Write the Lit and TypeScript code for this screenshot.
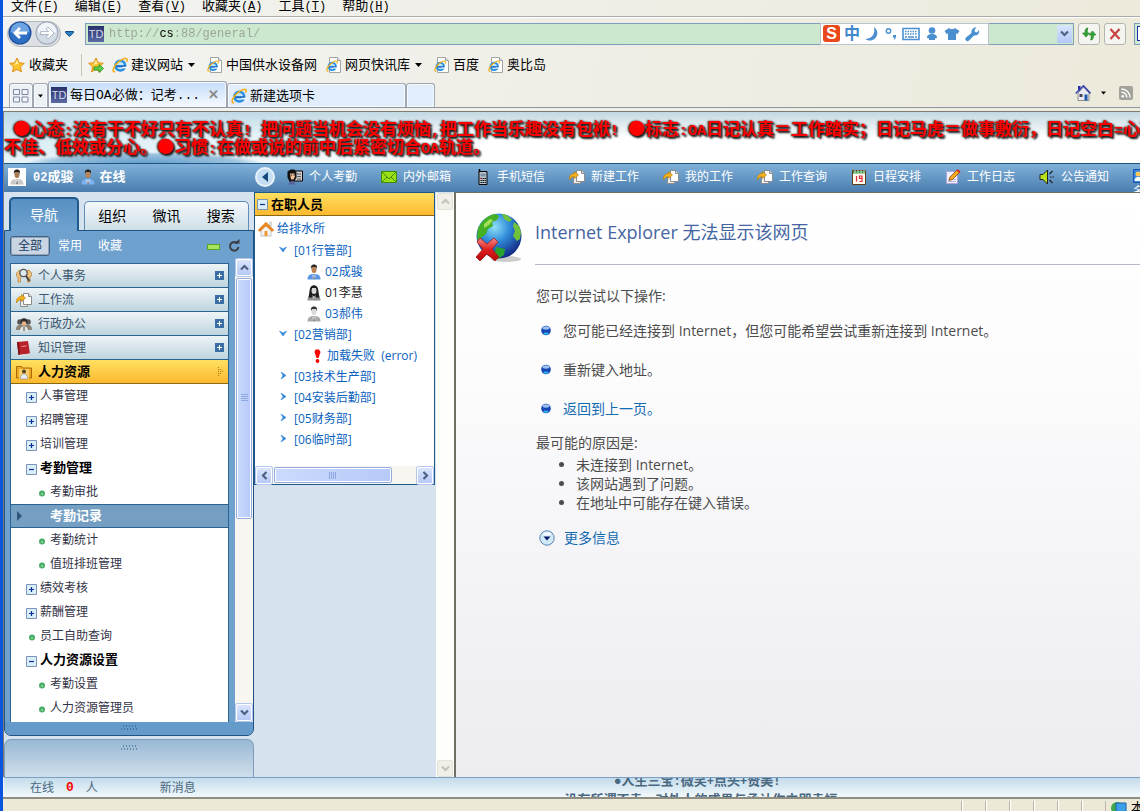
import { LitElement, html, css, svg, nothing, TemplateResult } from "lit";
import { customElement, state } from "lit/decorators.js";

/* ---------- small drawing library ---------- */

const ieMark = svg`
  <circle cx="8.3" cy="8.6" r="4.9" fill="#bfe6fb" stroke="#2a8fe0" stroke-width="2.6"/>
  <path d="M4 9.2h9.6" stroke="#1668c4" stroke-width="2"/>
  <path d="M10.5 10.6h5" stroke="#fff" stroke-width="1.6"/>
  <path d="M3.2 14.6C.2 15.6.6 12 3.4 8.2 6.6 4 12.4.4 14.6 1.6c1 .6.6 2-.2 3.2" fill="none" stroke="#f2b01e" stroke-width="1.6"/>`;

const ie = () => html`<svg class="i16" viewBox="0 0 16 16">${ieMark}</svg>`;

const iePage = () => html`<svg class="i16" viewBox="0 0 16 16">
  <path d="M3.5.5h8l3 3v12h-11z" fill="#fff" stroke="#a4a4a4"/>
  <path d="M11.5.5v3h3" fill="#ddd" stroke="#a4a4a4"/>
  <g transform="translate(0 3) scale(.75)">${ieMark}</g></svg>`;

const starPath = "M8 1l2.2 4.7 5.1.6-3.8 3.5 1 5.1L8 12.4 3.5 14.9l1-5.1L.7 6.3l5.1-.6z";
const star = (plus = false) => html`<svg class="i16" viewBox="0 0 16 16">
  <path d=${starPath} fill="#fdc32d" stroke="#d98a12" stroke-width=".9"/>
  <path d="M8 3l1.5 3.5L5.5 8z" fill="#fff0a8"/>
  ${plus ? svg`<path d="M6 10h5V7.5l4.5 4-4.5 4V13H6z" fill="#5fd04a" stroke="#1f8a1c" stroke-width=".8"/>` : nothing}</svg>`;

const person = (shirt: string, skin: string, hair: string, longHair = false) => html`<svg class="i16" viewBox="0 0 16 16">
  <path d="M1.5 15.5c0-4 2-5.500 6.500-5.500s6.500 1.500 6.500 5.500z" fill=${shirt}/>
  ${longHair ? svg`<path d="M2.500 12.500C4 6 3 .5 8 .5S12 6 13.500 12.500z" fill=${hair}/>` : nothing}
  <ellipse cx="8" cy="5.500" rx="2.500" ry="3.600" fill=${skin}/>
  <path d="M5 5C4.500 1.500 6 .4 8 .4S11.500 1.500 11 5L10 3H6z" fill=${hair}/>
  <path d="M6.500 10L8 12l1.500-2L9 15H7z" fill="#fff"/>
  <path d="M7.700 11.500h.7l.4 3-.8 1-.7-1z" fill="#666"/></svg>`;

const docs = () => html`<svg class="i16" viewBox="0 0 16 16">
  <path d="M4.500 6.500h7v8h-7z" fill="#eee" stroke="#8d8d8d"/>
  <path d="M7.500 1.500h5l3 3v8h-8z" fill="#fff" stroke="#8d8d8d"/>
  <path d="M12.500 1.500v3h3" fill="#ddd" stroke="#8d8d8d"/>
  <path d="M.5 11C0 7 2 4.500 5.500 4.500V2.500l4 3.500-4 3.500v-2C3.500 7.500 2 8.500.5 11z" fill="#f5b21d" stroke="#b97c0d" stroke-width=".7"/></svg>`;

const glyphs: Record<string, () => TemplateResult> = {
  attend: () => html`<svg class="i16" viewBox="0 0 16 16">
    <path d="M7 2h8.500v10H7z" fill="#cfcfcf" stroke="#000"/><path d="M10 5h4M10 7.500h4M10 10h4" stroke="#555"/>
    <path d="M.5 2.500l3-2h4l2 3v5l-3 5H3l-2.500-5z" fill="#111"/>
    <path d="M3 4.500h4.500l.5 3-1.500 3H4z" fill="#f2c09a"/><path d="M4 6h1M6.500 6h1" stroke="#000"/>
    <path d="M1 15.500l3-3.500h3l1 3.500z" fill="#5a5f9a"/></svg>`,
  mail: () => html`<svg class="i16" viewBox="0 0 16 16">
    <path d="M.5 2.500h15v11H.5z" fill="#9be015" stroke="#3f8a0a"/>
    <path d="M1 3l7 7 7-7M1 13l5-5M15 13l-5-5" fill="none" stroke="#3f8a0a"/></svg>`,
  phone: () => html`<svg class="i16" viewBox="0 0 16 16">
    <path d="M4.500 0v4" stroke="#000" stroke-width="1.500"/><path d="M4 2.500h8v13H4z" fill="#b9c3cc" stroke="#000"/>
    <path d="M5.500 4.500h5v3h-5z" fill="#7c92a6"/>
    <path d="M5.500 9.500h1.500m.5 0H9m.5 0H11M5.500 11.500h1.500m.5 0H9m.5 0H11M5.500 13.500h1.500m.5 0H9m.5 0H11" stroke="#111"/>
    <path d="M5.500 9.500h1.300" stroke="#d11"/></svg>`,
  docs,
  calendar: () => html`<svg class="i16" viewBox="0 0 16 16">
    <path d="M1.500 1.500h13v14h-13z" fill="#fffdf0" stroke="#5b3d1b"/>
    <path d="M2 2h12v2.500H2z" fill="#3e9a4c"/><path d="M4 1v3M7 1v3M10 1v3M13 1v3" stroke="#fff" stroke-width=".8"/>
    <path d="M5.500 7v5.500M8.500 9.500h2.500V7H8.500zm2.500 0v3H8.500" fill="none" stroke="#d23" stroke-width="1.200"/></svg>`,
  diary: () => html`<svg class="i16" viewBox="0 0 16 16">
    <path d="M1.500 2.500h11v12h-11z" fill="#f1efff" stroke="#a9a4dd"/><path d="M3 12.500h8M3 10.500h8" stroke="#b9b5e5"/>
    <path d="M4 11.500l1-3.500 7-7 2.500 2.500-7 7z" fill="#f7a823" stroke="#8b4a10" stroke-width=".8"/>
    <path d="M11.500 1.500L13 .3l2.600 2.500L14.300 4z" fill="#d8261c"/></svg>`,
  speaker: () => html`<svg class="i16" viewBox="0 0 16 16">
    <path d="M1 5.500h3L8.500 1v14L4 10.500H1z" fill="#b6e21a" stroke="#222"/>
    <path d="M10.500 5l3-3M11 8h1.500m1 0H15M10.500 11l3 3" stroke="#222" stroke-width="1.200"/></svg>`,
  card: () => html`<svg class="i16" viewBox="0 0 16 16">
    <path d="M.5 1.500h15v13H.5z" fill="#2b86e8" stroke="#1a56a8"/><circle cx="5" cy="6" r="2.500" fill="#ffc95a"/>
    <path d="M1.500 13c0-3 1.500-4 3.500-4s3.500 1 3.500 4z" fill="#fff"/></svg>`,
  affairs: () => html`<svg class="i16" viewBox="0 0 16 16">
    <path d="M.5 5l3-3 3 1v5l-2 1v5H2V9L.5 8zM10 3l3-1 2.500 3v3L14 9v5h-2.500V9L10 8z" fill="#f1c27a" stroke="#b3803a" stroke-width=".7"/>
    <circle cx="7.500" cy="5" r="3.700" fill="#dfe9f0" stroke="#555" stroke-width="1.300"/>
    <path d="M10 8l3.500 5" stroke="#444" stroke-width="2"/></svg>`,
  office: () => html`<svg class="i16" viewBox="0 0 16 16">
    <circle cx="4" cy="6" r="2.800" fill="#555"/><circle cx="12" cy="6" r="2.800" fill="#555"/>
    <path d="M0 14c0-4 1.500-5 4-5h8c2.500 0 4 1 4 5z" fill="#8d8478"/>
    <circle cx="8" cy="5.500" r="3.300" fill="#332b25"/><ellipse cx="8" cy="7.500" rx="2.300" ry="2.300" fill="#e5b48a"/>
    <path d="M4 15.500c0-4 1.500-5 4-5s4 1 4 5z" fill="#e6e6e6"/><path d="M7.500 11h1v4h-1z" fill="#444"/></svg>`,
  book: () => html`<svg class="i16" viewBox="0 0 16 16">
    <path d="M1 2l11-1 2 12.500L2.500 15z" fill="#b8222a"/><path d="M1 2l1.500 13 1.500-.3L2.700 1.900z" fill="#7b1016"/>
    <path d="M3 15l11-1.500v1.300L4 16z" fill="#ddd"/><path d="M5.500 6.500l5-.6" stroke="#ef9a9a"/></svg>`,
  hr: () => html`<svg class="i16" viewBox="0 0 16 16">
    <path d="M.5 2.500h5l1 1.500h9v10H.5z" fill="#f1a820" stroke="#a86a0b"/><path d="M3 5h10v10H3z" fill="#f7cf6b"/>
    <circle cx="8" cy="7.500" r="2" fill="#5c4020"/><path d="M4.500 15c0-4 1.500-5 3.500-5s3.500 1 3.500 5z" fill="#e9eef5" stroke="#777" stroke-width=".5"/></svg>`,
};

const homeOrange = () => html`<svg class="i16" viewBox="0 0 16 16">
  <path d="M3 8v7h10V8L8 3z" fill="#f4f4f4" stroke="#aaa" stroke-width=".7"/>
  <path d="M11.500 1h2v4h-2z" fill="#eee" stroke="#aaa" stroke-width=".5"/>
  <path d="M.3 9L8 1.300 15.700 9l-1.500 1.500L8 4.800 1.800 10.500z" fill="#f08a1c" stroke="#c9630a" stroke-width=".6"/>
  <path d="M6.500 10h3v5h-3z" fill="#ee9a34"/></svg>`;

const homeBlue = () => html`<svg class="i16" viewBox="0 0 16 16">
  <path d="M3 1h2.500v5H3z" fill="#2a2aa8"/><path d="M3 8v7.500h11V8L8.500 2z" fill="#e9e9f2" stroke="#777" stroke-width=".8"/>
  <path d="M.7 8.500L8.500.8l7 7.700" fill="none" stroke="#3c46b0" stroke-width="1.600"/>
  <path d="M4.500 9h3v3h-3z" fill="#445"/><path d="M9.500 9.500h3v6h-3z" fill="#1c58a8"/></svg>`;

const caret = (color = "#000", size = 7) => html`<svg class="caret" width=${size} height="4" viewBox="0 0 7 4"><path d="M0 0h7L3.500 4z" fill=${color}/></svg>`;

const chevron = (dir: "up" | "down" | "left" | "right", color = "#4d6185") => {
  const turn = { up: 0, right: 90, down: 180, left: 270 }[dir];
  return html`<svg width="9" height="9" viewBox="0 0 9 9"><path d="M1 6.500L4.500 3 8 6.500" fill="none" stroke=${color} stroke-width="2.200" transform=${`rotate(${turn} 4.5 4.5)`}/></svg>`;
};

const plusBox = (open: boolean) => html`<svg class="box" width="11" height="11" viewBox="0 0 11 11">
  <path d="M.5.5h10v10H.5z" fill="#d9eefa" stroke="#7b93b5"/>
  <path d=${open ? "M3 5.500h5" : "M3 5.500h5M5.500 3v5"} stroke="#0b2f94" stroke-width="1.200"/></svg>`;

const grip = () => html`<svg class="grip" width="17" height="5" viewBox="0 0 17 5">
  <path d="M2 1h1m2 0h1m2 0h1m2 0h1m2 0h1M0 4h1m2 0h1m2 0h1m2 0h1m2 0h1m2 0h1" stroke="#1d4f80"/></svg>`;

/* Half-width characters are set in a smaller monospaced face beside the full-width ones. */
const mixed = (text: string) =>
  text.split(/([\x20-\x7e]+)/).map((part, i) => (i % 2 ? html`<span class="half">${part}</span>` : part));

/* ---------- data ---------- */

const MENUS = [["文件", "F"], ["编辑", "E"], ["查看", "V"], ["收藏夹", "A"], ["工具", "T"], ["帮助", "H"]];

const SHORTCUTS: [string, string][] = [
  ["attend", "个人考勤"], ["mail", "内外邮箱"], ["phone", "手机短信"], ["docs", "新建工作"], ["docs", "我的工作"],
  ["docs", "工作查询"], ["calendar", "日程安排"], ["diary", "工作日志"], ["speaker", "公告通知"],
];

const GROUPS: [string, string][] = [["affairs", "个人事务"], ["docs", "工作流"], ["office", "行政办公"], ["book", "知识管理"]];

type Item = { label: string; kind: "plus" | "minus" | "dot"; deep?: boolean };
const ITEMS: Item[] = [
  { label: "人事管理", kind: "plus" },
  { label: "招聘管理", kind: "plus" },
  { label: "培训管理", kind: "plus" },
  { label: "考勤管理", kind: "minus" },
  { label: "考勤审批", kind: "dot", deep: true },
  { label: "考勤记录", kind: "dot", deep: true },
  { label: "考勤统计", kind: "dot", deep: true },
  { label: "值班排班管理", kind: "dot", deep: true },
  { label: "绩效考核", kind: "plus" },
  { label: "薪酬管理", kind: "plus" },
  { label: "员工自助查询", kind: "dot" },
  { label: "人力资源设置", kind: "minus" },
  { label: "考勤设置", kind: "dot", deep: true },
  { label: "人力资源管理员", kind: "dot", deep: true },
];

@customElement("app-root")
export class AppRoot extends LitElement {
  @state() private selected = "考勤记录";

  static styles = css`
    :host {
      display: flex; flex-direction: column; height: 100vh; overflow: hidden; box-sizing: border-box;
      border-left: 3px solid #0a55e0;
      font: 12px/16px "Liberation Sans", "Noto Sans CJK SC", sans-serif; color: #000;
      background: linear-gradient(100deg, #f3f3f1 0, #eeede3 60%, #ece9d8 100%);
    }
    * { box-sizing: border-box; }
    button, input { font: inherit; color: inherit; border: 0; background: none; padding: 0; margin: 0; }
    button { white-space: nowrap; }
    a { text-decoration: none; color: inherit; }
    ul { list-style: none; margin: 0; padding: 0; }
    svg { display: block; flex: none; }
    .i16 { width: 16px; height: 16px; }
    .half { font-family: "Liberation Mono", monospace; line-height: 0; }

    /* browser chrome */
    .menus { display: flex; align-items: flex-start; gap: 16px; height: 18px; padding-left: 8px; border-bottom: 2px groove #fff; font-size: 13px; line-height: 12px; flex: none; }
    .menus .half { font-size: 12px; }
    .nav { display: flex; align-items: center; height: 31px; padding-left: 4px; flex: none; }
    .travel { display: flex; align-items: center; width: 54px; height: 26px; border-radius: 13px; border: 1px solid #b3b6bb; background: #dcdfe3; }
    .travel button { width: 26px; height: 26px; }
    .history { width: 24px; padding-left: 4px; }
    .address { position: relative; flex: 1; display: flex; align-items: center; height: 22px; border: 1px solid #7f9db9; background: #cce8cf; padding-left: 2px; }
    .td { display: grid; place-items: center; width: 16px; height: 16px; background: linear-gradient(#27306a, #5b6aa6); color: #d5dbea; font: 11px/16px "Liberation Sans", sans-serif; flex: none; }
    .url { flex: 1; min-width: 0; height: 20px; margin-left: 5px; font: 12px/20px "Liberation Mono", monospace; color: #8f9a8c; outline: none;
      background: linear-gradient(90deg, #9aa397 50px, #000 50px, #000 65px, #9aa397 65px); -webkit-background-clip: text; background-clip: text; -webkit-text-fill-color: transparent; }
    .drop { width: 15px; height: 18px; display: grid; place-items: center; margin-right: 1px; border-radius: 1px; background: linear-gradient(#dbe6fd, #b3c8f7); }
    .ime { position: absolute; right: 84px; top: -1px; width: 169px; height: 22px; display: flex; align-items: center; gap: 4px; padding-left: 2px; background: #fff; border: 1px solid #b9c4cf; color: #4488cc; font-size: 16px; line-height: 20px; font-weight: 700; }
    .ime .logo { width: 17px; height: 17px; border-radius: 3px; background: #e8481a; color: #fff; text-align: center; font: 700 16px/17px "Liberation Sans", sans-serif; }
    .sq { width: 22px; height: 22px; border: 1px solid #b4b6b2; border-radius: 3px; background: #f4f4f0; display: grid; place-items: center; margin-left: 4px; }
    .search { width: 6px; height: 22px; margin-left: 8px; border: 1px solid #7f9db9; border-right: 0; background: #cce8cf; display: flex; align-items: center; justify-content: flex-end; }
    .search span { width: 3px; height: 15px; border: 1px solid #1c2fa8; border-right: 0; background: #fff; }
    .favs { display: flex; align-items: center; height: 32px; padding-left: 6px; font-size: 13px; flex: none; }
    .favs button { display: flex; align-items: center; gap: 3px; margin-right: 9px; }
    .favs .first { gap: 4px; margin-right: 20px; }
    .favs .add { margin-right: 8px; padding-left: 6px; border-left: 1px solid #c5c2b4; height: 22px; margin-left: -7px; }
    .favs .caret { margin: 0 3px 0 2px; }
    .tabs { display: flex; align-items: flex-end; height: 27px; padding-left: 6px; border-bottom: 1px solid #8c95a4; flex: none; font-size: 13px; }
    .tab { display: flex; align-items: center; gap: 3px; height: 24px; padding-left: 3px; border: 1px solid #a0a7b0; border-bottom: 0; border-radius: 3px 3px 0 0; background: #e1edfa; box-shadow: inset 0 0 0 1px #f6faff; }
    .quick { width: 24px; padding-left: 3px; background: #eef1f4; }
    .quick2 { width: 15px; padding-left: 4px; background: #eef1f4; }
    .tab.on { width: 179px; height: 26px; padding-left: 2px; padding-right: 7px; background: linear-gradient(#c5dcf9, #f6faff); }
    .tab.on .x { margin-left: auto; color: #8a8a8a; font-weight: 700; }
    .tab.two { width: 179px; }
    .tab.new { width: 29px; }
    .tools { margin-left: auto; display: flex; align-items: center; gap: 10px; padding: 0 7px 6px 0; }
    .rss { margin-left: 3px; width: 14px; height: 14px; }

    /* framed page */
    .page { flex: 1; min-height: 0; margin-top: 3px; display: flex; flex-direction: column; border-left: 1px solid #7c7c74; border-top: 1px solid #7c7c74; background: #d6e3ee; }
    .banner { height: 51px; flex: none; padding-top: 7px; overflow: hidden; font: 700 17px/18px "Noto Sans CJK SC", sans-serif; color: #f00; white-space: nowrap;
      text-shadow: 1px 1px 2px #111, 2px 2px 2px #333, -1px 0 2px #444;
      background: radial-gradient(ellipse 120px 12px at 140px 52px, #5f9acb 0, #9cc3dd 80%, transparent 100%), radial-gradient(ellipse 500px 60px at 0 20px, #b6dcec99, transparent), linear-gradient(#c3d8e2, #fff 50%); }
    .banner .half { font-size: 15px; white-space: pre; }
    .bar { height: 29px; flex: none; display: flex; align-items: center; padding: 0 0 3px 4px; border-top: 1px solid #1d5480; background: linear-gradient(#80b1da, #4a7dae); color: #fff; overflow: hidden; }
    .me { display: flex; align-items: center; width: 247px; flex: none; font-weight: 700; font-size: 13px; }
    .me .half { font-size: 12px; }
    .me .face { width: 18px; height: 18px; background: #fff; margin-right: 7px; padding: 1px; }
    .me .name { margin-right: 7px; }
    .me .i16 { margin-right: 3px; }
    .me .face .i16 { margin: 0; }
    .round { width: 20px; height: 20px; border-radius: 50%; border: 2px solid #e6f1fa; background: #c3def3; display: grid; place-items: center; margin-right: 12px; flex: none; }
    .short { display: flex; align-items: center; gap: 6px; width: 94px; flex: none; }
    .short.cut { align-self: flex-start; flex-direction: column; align-items: flex-start; gap: 0; padding-top: 4px; }
    .main { flex: 1; min-height: 0; display: flex; }

    /* navigation column */
    .side { width: 250px; flex: none; display: flex; flex-direction: column; }
    .navtabs { display: flex; align-items: flex-end; gap: 5px; height: 38px; padding: 0 5px; flex: none; font-size: 14px; line-height: 18px; }
    .navtabs .cur { width: 70px; height: 34px; color: #fff; border: 2px solid #1f5a8e; border-bottom: 0; border-radius: 5px 5px 0 0; background: linear-gradient(#5790c3, #6fa2cf); position: relative; top: 1px; }
    .rest { flex: 1; display: flex; justify-content: space-around; height: 29px; border: 1px solid #5d8db6; border-bottom: 0; border-radius: 5px 5px 0 0; background: linear-gradient(#f4f8fa, #cfdfe8); }
    .panel { flex: 1; min-height: 0; display: flex; flex-direction: column; background: #6fa1ce; border: 1px solid #1f5282; border-radius: 0 0 7px 7px; overflow: hidden; }
    .filters { display: flex; align-items: center; height: 28px; padding: 2px 13px 0 5px; gap: 8px; color: #fff; flex: none; }
    .filters .all { width: 40px; height: 20px; border: 1px solid #44607f; border-radius: 3px; background: #c9d5e2; color: #16395f; box-shadow: inset 0 0 0 1px #8ea6bf; }
    .filters .minus { width: 13px; height: 6px; border: 1px solid #53a62a; background: #a9e25c; margin: 2px 0 0 auto; }
    .filters .save { margin-left: 8px; }
    .body { flex: 1; min-height: 0; display: flex; justify-content: space-between; padding-left: 5px; }
    .acc { width: 219px; margin-top: 4px; border: 1px solid #2a6392; border-bottom: 0; background: #fff; overflow: hidden; }
    .group { display: flex; align-items: center; gap: 6px; width: 100%; height: 24px; padding: 0 4px 0 5px; border-bottom: 1px solid #2a6392; background: linear-gradient(#eef4f7, #bfd5de); color: #3c566e; }
    .group .p { margin-left: auto; width: 9px; height: 9px; background: #3c6ea6; }
    .group.open { font-weight: 700; font-size: 13px; color: #000; border-bottom-color: #8a6a10; background: linear-gradient(#ffe060, #fcb92f); }
    .group.open svg:last-child { margin-left: auto; }
    .item { display: flex; align-items: center; gap: 3px; width: 100%; height: 24px; padding-left: 15px; color: #333347; }
    .item .box, .item .dot { margin-top: 2px; }
    .item .dot { width: 11px; }
    .item.deep { padding-left: 25px; }
    .item.bold { font-weight: 700; font-size: 13px; color: #000; }
    .item.sel { background: #749fc2; border: 1px solid #2a6392; border-width: 1px 0; color: #fff; font-weight: 700; font-size: 13px; padding-left: 6px; gap: 28px; }
    .vs { width: 18px; display: flex; flex-direction: column; background: #f7f6f1; padding: 0 1px; }
    .sb { display: grid; place-items: center; width: 16px; height: 17px; border: 1px solid #fff; border-radius: 2px; background: linear-gradient(#dae4fd, #b7caf5); box-shadow: 0 0 0 1px #b4c6f0; flex: none; }
    .thumb { display: grid; place-items: center; background: linear-gradient(90deg, #cbdafd, #b6c9f8); border: 1px solid #93abe0; border-radius: 2px; outline: 1px solid #fff; outline-offset: -2px; }
    .vs .thumb { flex: 0 0 52%; margin-top: 2px; }
    .vs .sb:last-child { margin-top: auto; margin-bottom: 1px; }
    .foot { display: grid; place-items: center; height: 13px; background: #659bcb; flex: none; padding-bottom: 3px; }
    .panel2 { height: 38px; margin-top: 3px; border: 1px solid #7d9dba; border-bottom: 0; border-radius: 7px 7px 0 0; background: linear-gradient(#98b9d5, #d0deea); display: grid; justify-content: center; padding-top: 5px; flex: none; }

    /* staff tree */
    .staff { width: 181px; flex: none; align-self: flex-start; border: 1px solid #1f5a8e; border-top: 0; background: #fff; color: #0a62c0; font-family: "Open Sans", "Noto Sans CJK SC", sans-serif; }
    .head { display: flex; align-items: center; gap: 3px; width: 100%; height: 24px; padding-left: 2px; border-top: 1px solid #1f5a8e; border-bottom: 1px solid #8a6a10; background: linear-gradient(#ffe060, #fcb92f); color: #000; font-weight: 700; font-size: 13px; margin-bottom: 2px; }
    .row { display: flex; align-items: center; height: 21px; white-space: nowrap; }
    .row.root { gap: 3px; padding-left: 3px; height: 22px; }
    .row.dept { gap: 6px; padding-left: 23px; }
    .row.user { gap: 3px; padding-left: 51px; }
    .row.user.woman { color: #222; }
    .row.err { gap: 6px; padding-left: 58px; }
    .hs { display: flex; align-items: center; height: 18px; margin-top: 16px; padding: 0 1px; background: #f7f6f1; }
    .hs .thumb { width: 118px; height: 16px; margin-left: 2px; }
    .hs .sb:last-child { margin-left: auto; }
    .off { width: 18px; margin: 1px 0 0 1px; background: #fefefb; display: flex; flex-direction: column; justify-content: space-between; padding: 0 1px; flex: none; }
    .off button { width: 16px; height: 17px; display: grid; place-items: center; border: 1px solid #e3e2d8; border-radius: 2px; background: #f1f0e8; }

    /* error page */
    .error { flex: 1; min-width: 0; border: 2px solid #716f64; border-right: 0; border-bottom: 0; border-top-width: 1px; padding: 19px 0 0 20px; background: linear-gradient(#fff 0, #fcfcfd 30%, #ececf1 100%); font: 14px/20px "Open Sans", "Noto Sans CJK SC", sans-serif; color: #4c4c4c; }
    .top { display: flex; gap: 11px; }
    .globe { width: 48px; height: 50px; margin-top: 1px; }
    h1 { flex: 1; height: 53px; margin: 0; padding-top: 7px; border-bottom: 1px solid #b4b8c8; font-weight: 400; font-size: 18px; line-height: 26px; color: #4465a2; }
    .txt { padding-left: 60px; }
    p { margin: 0; }
    p.try { margin-top: 21px; }
    .todo { margin: 15px 0 14px; }
    .todo li { display: flex; align-items: center; gap: 11px; padding-left: 4px; height: 20px; margin-top: 19px; }
    .todo li:first-child { margin-top: 0; }
    .txt a { color: #136bb0; }
    .why { list-style: disc; padding-left: 40px; line-height: 19px; margin-top: 2px; }
    .more { display: flex; align-items: center; gap: 9px; margin-top: 16px; padding-left: 3px; color: #136bb0; }

    /* bottom strips */
    .online { height: 20px; flex: none; display: flex; border-top: 1px solid #7ba0c4; background: linear-gradient(#c3dceb, #f2f8fb); color: #4a6880; overflow: hidden; margin-left: 1px; }
    .online .l { width: 250px; display: flex; align-items: center; padding-left: 26px; flex: none; }
    .online b { color: #f00; margin: 0 12px; font-size: 13px; font-family: "Liberation Mono", monospace; }
    .online .msg { margin-left: 62px; }
    .ticker { flex: 1; margin-top: -7px; text-align: center; font-weight: 700; font-size: 13px; line-height: 19px; white-space: nowrap; }
    .ticker .half { font-size: 12px; }
    .status { height: 14px; flex: none; display: flex; justify-content: flex-end; border-top: 2px solid #8f8d80; background: #ece9d8; overflow: hidden; padding-top: 2px; }
    .status i { width: 24px; border-left: 1px solid #bab7a6; box-shadow: inset 1px 0 #fff; }
    .status .zone { display: flex; gap: 4px; width: 35px; padding-left: 5px; border-left: 1px solid #bab7a6; font-size: 13px; line-height: 14px; overflow: hidden; flex: none; }
  `;

  private chrome() {
    return html`
      <nav class="menus">${MENUS.map(([n, k]) => html`<button>${n}<span class="half">(<u>${k}</u>)</span></button>`)}</nav>
      <div class="nav">
        <div class="travel">
          <button aria-label="后退"><svg width="26" height="26" viewBox="0 0 26 26"><circle cx="12" cy="12" r="11.500" fill="#1d4f9e"/><circle cx="12" cy="12" r="10.300" fill="#2e6fc4"/><path d="M2.500 11a9.500 9.500 0 0 1 19 0c-5 2-14 2-19 0z" fill="#6fa4e2"/><path d="M5 12l6-6 2 2-2.600 2.600h8.600v3h-8.600L13 16l-2 2z" fill="#fff"/></svg></button>
          <button aria-label="前进"><svg width="26" height="26" viewBox="0 0 26 26"><circle cx="13" cy="12" r="11.500" fill="#9aa6b6"/><circle cx="13" cy="12" r="10.500" fill="#d3dbe5"/><path d="M3.500 11a9.500 9.500 0 0 1 19 0c-5 2-14 2-19 0z" fill="#f0f4f8"/><path d="M20 12l-6-6-2 2 2.600 2.600h-8v3h8L12 16l2 2z" fill="#fff" stroke="#9aa6b6" stroke-width=".8"/></svg></button>
        </div>
        <button class="history" aria-label="历史记录"><svg width="9" height="6" viewBox="0 0 9 6"><path d="M.5.5h8v1.200L4.500 5.500.5 1.700z" fill="#2a7fc0" stroke="#124c86"/></svg></button>
        <div class="address">
          <span class="td">TD</span>
          <input class="url" aria-label="地址" .value=${"http://cs:88/general/"} />
          <button class="drop" aria-label="展开">${chevron("down")}</button>
          <div class="ime">
            <span class="logo">S</span><span>中</span>
            <svg width="16" height="16" viewBox="0 0 16 16"><path d="M10 1c4 3 4.500 8 1 11.500-3 2.700-7.500 2.500-9.500.5C9 12.500 11.500 7 10 1z" fill="#4a90d0"/></svg>
            <svg width="14" height="16" viewBox="0 0 14 16"><circle cx="4.500" cy="5" r="2.200" fill="none" stroke="#4a90d0" stroke-width="1.400"/><path d="M9 9h3c.5 2.500-.5 4-2.500 5 .8-1.200 1-2 .8-2.500H9z" fill="#4a90d0"/></svg>
            <svg width="18" height="14" viewBox="0 0 18 14"><path d="M1 1.500h16v11H1z" fill="#fff" stroke="#4a90d0" stroke-width="1.600"/><path d="M3 4.500h12M3 7h12" stroke="#4a90d0" stroke-width="1.600" stroke-dasharray="1.500 1"/><path d="M3 10h2m1 0h6m1 0h2" stroke="#4a90d0" stroke-width="1.500"/></svg>
            <svg width="16" height="16" viewBox="0 0 16 16"><circle cx="8" cy="4.500" r="3.300" fill="#4a90d0"/><path d="M3 12c0-3 2-4 5-4s5 1 5 4l-2 .5V14H5v-1.500z" fill="#4a90d0"/></svg>
            <svg width="16" height="16" viewBox="0 0 16 16"><path d="M5 2c1 1.500 5 1.500 6 0l4.500 3-2 3L12 7.500V14H4V7.500L2.500 8l-2-3z" fill="#4a90d0"/></svg>
            <svg width="16" height="16" viewBox="0 0 16 16"><path d="M2 14.500c-1-1-1-2 0-3L7.500 7C7 4 9 1 12.500 1.500L10.500 4l.5 2 2 .5 2-2.500c1 3.500-2 6-5 5.500L5 14.500c-1 1-2 1-3 0z" fill="#4a90d0"/></svg>
          </div>
        </div>
        <button class="sq" aria-label="刷新"><svg width="16" height="14" viewBox="0 0 16 14"><path d="M7 1C4.500 1 4 2.500 4 6H1.500L5 10l3.500-4H6.300C6.300 3.500 6.300 2 7 1zM9.500 13c2.500 0 3-1.500 3-5H15l-3.500-4L8 8h2.200c0 2.500 0 4-.7 5z" fill="#34a436" stroke="#177a1c" stroke-width=".6"/></svg></button>
        <button class="sq" aria-label="停止"><svg width="12" height="12" viewBox="0 0 12 12"><path d="M1.500 1l9 10M10.500 1l-9 10" stroke="#c8433f" stroke-width="2.200"/></svg></button>
        <div class="search"><span></span></div>
      </div>
      <div class="favs">
        <button class="first">${star()}收藏夹</button>
        <button class="add" aria-label="添加到收藏夹栏">${star(true)}</button>
        <button>${ie()}建议网站 ${caret()}</button>
        <button>${iePage()}中国供水设备网</button>
        <button>${iePage()}网页快讯库 ${caret()}</button>
        <button>${iePage()}百度</button>
        <button>${iePage()}奥比岛</button>
      </div>
      <div class="tabs">
        <button class="tab quick" aria-label="快速导航选项卡"><svg width="16" height="14" viewBox="0 0 16 14"><path d="M.5.5h6v5h-6zM9 .5h6v5H9zM.5 8h6v5h-6zM9 8h6v5H9z" fill="#f2f4fb" stroke="#7d86a4"/></svg></button>
        <button class="tab quick2" aria-label="选项卡列表">${caret("#000", 5)}</button>
        <button class="tab on"><span class="td">TD</span><span>每日<span class="half">OA</span>必做：记考<span class="half">...</span></span><span class="x">✕</span></button>
        <button class="tab two">${ie()}新建选项卡</button>
        <button class="tab new" aria-label="新选项卡"></button>
        <div class="tools">${homeBlue()}${caret("#000", 5)}
          <svg class="rss" viewBox="0 0 14 14"><rect width="14" height="14" rx="2" fill="#a3a39c"/><circle cx="3.800" cy="10.300" r="1.300" fill="#fff"/><path d="M2.500 6.200a5.300 5.300 0 0 1 5.300 5.300M2.500 3a8.500 8.500 0 0 1 8.500 8.500" fill="none" stroke="#fff" stroke-width="1.400"/></svg>
        </div>
      </div>`;
  }

  private item(it: Item) {
    if (it.label === this.selected)
      return html`<button class="item sel"><svg width="5" height="10" viewBox="0 0 5 10"><path d="M0 0l5 5-5 5z" fill="#2c5579"/></svg>${it.label}</button>`;
    const mark = it.kind === "dot"
      ? html`<svg class="dot" width="11" height="7" viewBox="0 0 11 7"><circle cx="6" cy="3.500" r="3" fill="#46a86a"/><circle cx="6" cy="4" r="1.300" fill="#7fd07f"/></svg>`
      : plusBox(it.kind === "minus");
    return html`<button class="item ${it.deep ? "deep" : ""} ${it.kind === "minus" ? "bold" : ""}"
      @click=${() => it.kind === "dot" && (this.selected = it.label)}>${mark}${it.label}</button>`;
  }

  private side() {
    return html`<aside class="side">
      <div class="navtabs"><button class="cur">导航</button>
        <div class="rest"><button>组织</button><button>微讯</button><button>搜索</button></div></div>
      <section class="panel">
        <div class="filters"><button class="all">全部</button><button>常用</button><button class="save">收藏</button>
          <button class="minus" aria-label="收起"></button>
          <svg width="12" height="14" viewBox="0 0 12 14"><path d="M9.500 4.500A4.300 4.300 0 1 0 10.500 8" fill="none" stroke="#3a3f45" stroke-width="2"/><path d="M6 4.500h5.500V0z" fill="#3a3f45"/></svg>
        </div>
        <div class="body">
          <div class="acc">
            ${GROUPS.map(([g, n]) => html`<button class="group">${glyphs[g]()}${n}<svg class="p" viewBox="0 0 9 9"><path d="M2 4.500h5M4.500 2v5" stroke="#fff"/></svg></button>`)}
            <button class="group open">${glyphs.hr()}人力资源<svg width="6" height="9" viewBox="0 0 6 9"><path d="M.5 0v9M2.500 2v5M4.500 3.500v2" stroke="#a97a12" stroke-dasharray="1 1"/></svg></button>
            ${ITEMS.map((it) => this.item(it))}
          </div>
          <div class="vs"><button class="sb" aria-label="向上">${chevron("up")}</button>
            <div class="thumb"><svg width="7" height="8" viewBox="0 0 7 8"><path d="M0 .5h7M0 2.500h7M0 4.500h7M0 6.500h7" stroke="#8fa8e0"/></svg></div>
            <button class="sb" aria-label="向下">${chevron("down")}</button></div>
        </div>
        <div class="foot">${grip()}</div>
      </section>
      <div class="panel2">${grip()}</div>
    </aside>`;
  }

  private dept(name: string, open = false) {
    return html`<a class="row dept" href="#"><svg width="10" height="10" viewBox="0 0 10 10">
      <path d=${open ? "M1.500 1L5 6l3.500-5L5 3z" : "M3 0l5 3.500L3 7l2-3.500z"} fill="#2f86d8" stroke="#2f86d8" stroke-width=".6"/></svg>${name}</a>`;
  }

  private staff() {
    return html`<section class="staff">
      <button class="head">${plusBox(true)}在职人员</button>
      <a class="row root" href="#">${homeOrange()}给排水所</a>
      ${this.dept("[01行管部]", true)}
      <a class="row user" href="#">${person("#5b95e8", "#b98257", "#2b2b2b")}02成骏</a>
      <a class="row user woman" href="#">${person("#8f8f8f", "#d8d8d8", "#1c1c1c", true)}01李慧</a>
      <a class="row user" href="#">${person("#a9a9a9", "#d8d8d8", "#333")}03郝伟</a>
      ${this.dept("[02营销部]", true)}
      <a class="row err" href="#"><svg width="8" height="14" viewBox="0 0 8 14"><path d="M2.500.5h3.500l1.500 2.500-2 6h-2L1.500 3z" fill="#f00"/><circle cx="4.500" cy="12" r="1.900" fill="#f00"/></svg><span>加载失败&nbsp; (error)</span></a>
      ${["[03技术生产部]", "[04安装后勤部]", "[05财务部]", "[06临时部]"].map((d) => this.dept(d))}
      <div class="hs"><button class="sb" aria-label="向左">${chevron("left")}</button>
        <div class="thumb"><svg width="8" height="7" viewBox="0 0 8 7"><path d="M.5 0v7M2.500 0v7M4.500 0v7M6.500 0v7" stroke="#8fa8e0"/></svg></div>
        <button class="sb" aria-label="向右">${chevron("right")}</button></div>
    </section>
    <div class="off"><button aria-label="向上">${chevron("up", "#c4c3b8")}</button><button aria-label="向下">${chevron("down", "#c4c3b8")}</button></div>`;
  }

  private error() {
    const ball = () => html`<svg width="12" height="12" viewBox="0 0 12 12"><circle cx="6" cy="5.500" r="4.800" fill="#1746b4"/><ellipse cx="6" cy="3" rx="3.500" ry="1.700" fill="#9dc0f0"/><ellipse cx="6" cy="8.600" rx="2.600" ry="1.200" fill="#35b5ee"/></svg>`;
    return html`<article class="error">
      <div class="top">
        <svg class="globe" viewBox="0 0 48 50">
          <defs><radialGradient id="sea" cx=".4" cy=".3" r=".75"><stop offset="0" stop-color="#8fe0f8"/><stop offset=".45" stop-color="#2f8ad8"/><stop offset="1" stop-color="#0e1f7c"/></radialGradient>
          <linearGradient id="red" x1="0" y1="0" x2="0" y2="1"><stop offset="0" stop-color="#f48a8a"/><stop offset=".5" stop-color="#e01f1f"/><stop offset="1" stop-color="#b00808"/></linearGradient></defs>
          <ellipse cx="30" cy="46" rx="15" ry="3" fill="#9a9a9a" opacity=".5"/>
          <circle cx="23" cy="23" r="22.500" fill="url(#sea)"/>
          <path d="M2 16C5 8 12 2 19 1l4 2-2 4-5 2 1 4-5 3-2 5-5 4-3 3c-1-4-1-8 0-12z" fill="#44b024"/>
          <path d="M8 11l6-5 3 1-4 5-5 3z" fill="#a5df58"/>
          <path d="M26 1c4 0 8 3 10 6l-3 2-5-3zM38 9l5 4 2 6-1 7-3 2-4-5 2-5-2-5z" fill="#6fc23a"/>
          <path d="M20 34l9 2-1 6-6 4-4-3z" fill="#27a22c"/>
          <path d="M1 29l3-4 7 6 7-6 4 4-6 7 7 8-4 4-8-7-7 7-4-4 7-8z" fill="url(#red)" stroke="#a81616" stroke-width=".8"/>
        </svg>
        <h1>Internet Explorer 无法显示该网页</h1>
      </div>
      <div class="txt">
        <p class="try">您可以尝试以下操作:</p>
        <ul class="todo">
          <li>${ball()}<span>您可能已经连接到 Internet，但您可能希望尝试重新连接到 Internet。</span></li>
          <li>${ball()}<span>重新键入地址。</span></li>
          <li>${ball()}<a href="#">返回到上一页。</a></li>
        </ul>
        <p>最可能的原因是:</p>
        <ul class="why"><li>未连接到 Internet。</li><li>该网站遇到了问题。</li><li>在地址中可能存在键入错误。</li></ul>
        <button class="more"><svg width="16" height="16" viewBox="0 0 16 16"><circle cx="8" cy="8" r="7.200" fill="#cfe9f7" stroke="#5d83b4"/><path d="M4 3.500a6 6 0 0 1 8 0l-1 2H5z" fill="#f5fbff"/><path d="M4.500 6.500h7L8 10.500z" fill="#0a1a6a"/></svg>更多信息</button>
      </div>
    </article>`;
  }

  render() {
    return html`
      ${this.chrome()}
      <div class="page">
        <header class="banner">
          <div>${mixed(" ●心态:没有干不好只有不认真! 把问题当机会没有烦恼,把工作当乐趣没有包袱! ●标志:OA日记认真＝工作踏实；日记马虎＝做事敷衍，日记空白=心态")}</div>
          <div>${mixed("不佳、低效或分心。●习惯:在做或说的前中后紧密切合OA轨道。")}</div>
        </header>
        <div class="bar">
          <div class="me"><span class="face">${person("#c9c9c9", "#a87850", "#222")}</span><span class="name">${mixed("02成骏")}</span>${person("#7db4f5", "#b98257", "#222")}在线</div>
          <button class="round" aria-label="收起侧栏"><svg width="6" height="10" viewBox="0 0 6 10"><path d="M6 0v10L0 5z" fill="#164a7a"/></svg></button>
          ${SHORTCUTS.map(([g, n]) => html`<a class="short" href="#">${glyphs[g]()}${n}</a>`)}
          <a class="short cut" href="#">${glyphs.card()}名片</a>
        </div>
        <div class="main">${this.side()}${this.staff()}${this.error()}</div>
      </div>
      <footer class="online">
        <div class="l">在线<b>0</b>人<span class="msg">新消息</span></div>
        <div class="ticker">${mixed("●人生三宝:微笑+点头+赞美!")}<br />●没有所谓不幸，对外人的成果与承认你立即幸福</div>
      </footer>
      <div class="status"><i></i><i></i><i></i><i></i><i></i><i></i>
        <span class="zone"><svg class="i16" viewBox="0 0 16 16"><circle cx="6" cy="7" r="6" fill="#3fa84a"/><path d="M5 2h10v10H5z" fill="#3aa0e8" stroke="#1c5ea8"/></svg>本</span></div>`;
  }
}
